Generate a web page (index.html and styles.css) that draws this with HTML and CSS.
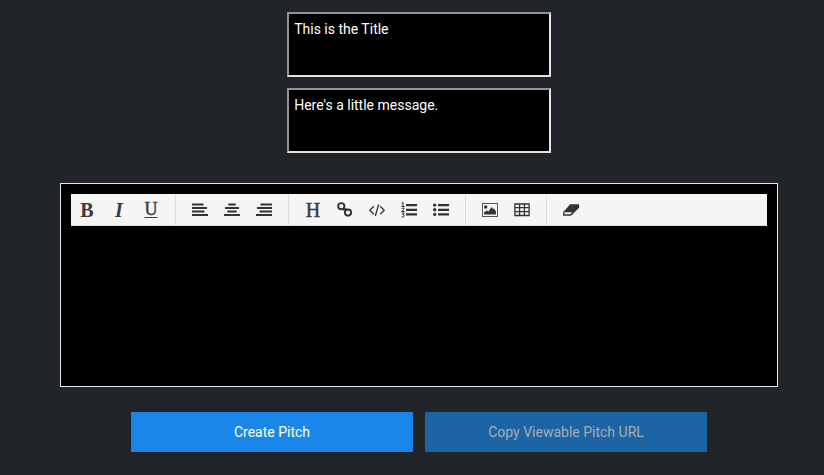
FILE: index.html
```html
<!DOCTYPE html>
<html lang="en">
<head>
<meta charset="utf-8">
<title>Create Pitch</title>
<link rel="stylesheet" href="styles.css">
</head>
<body>
<main class="page">
  <textarea class="field" spellcheck="false">This is the Title</textarea>
  <textarea class="field" spellcheck="false">Here's a little message.</textarea>
  <section class="editor">
    <div class="toolbar">
      <div class="group">
        <button class="tool letter bold">B</button>
        <button class="tool letter italic">I</button>
        <button class="tool letter underline">U</button>
      </div>
      <div class="group">
        <button class="tool" aria-label="Align left"><svg viewBox="0 0 16 14"><path d="M0 .5h11.500v2.100H0zM0 4h15v2.100H0zM0 7.500h12.500v2.100H0zM0 11h16v2.100H0z"/></svg></button>
        <button class="tool" aria-label="Align center"><svg viewBox="0 0 16 14"><path d="M4.300 .5h7.400v2.100H4.300zM1 4h14v2.100H1zM3.300 7.500h9.400v2.100H3.300zM0 11h16v2.100H0z"/></svg></button>
        <button class="tool" aria-label="Align right"><svg viewBox="0 0 16 14"><path d="M4.500 .5H16v2.100H4.500zM1 4h15v2.100H1zM3.500 7.500H16v2.100H3.500zM0 11h16v2.100H0z"/></svg></button>
      </div>
      <div class="group">
        <button class="tool letter heading">H</button>
        <button class="tool" aria-label="Link"><svg viewBox="0 0 16 14"><g class="line link"><circle cx="4.300" cy="3.200" r="3.100"/><circle cx="11" cy="9.600" r="3.100"/><path d="M5.200 5.500l2.600 1.800M7.500 5.500l2.500 1.800"/></g></svg></button>
        <button class="tool" aria-label="Code"><svg viewBox="0 0 16 14"><path class="line code" d="M4.800 3.300L.8 7.300l4 4M11.200 3.300l4 4-4 4M9.700 1.500L6.300 13"/></svg></button>
        <button class="tool" aria-label="Numbered list"><svg viewBox="0 0 16 14"><path d="M5 1h11v2.200H5zM5 5.700h11v2.200H5zM5 10.300h11v2.200H5z"/><path class="line digits" d="M.6.300L2-.7v4M.4 3.500h3.200M.6 5.500Q3.200 4 3.200 6L.6 8.500h3M.6 10h2.600L1.800 11.700Q3.500 11.700 3.200 13.300Q2.500 14.500 .5 13.900"/></svg></button>
        <button class="tool" aria-label="Bulleted list"><svg viewBox="0 0 16 14"><path d="M5 1h11v2.200H5zM5 5.700h11v2.200H5zM5 10.300h11v2.200H5z"/><circle cx="1.700" cy="2.100" r="1.700"/><circle cx="1.700" cy="6.800" r="1.700"/><circle cx="1.700" cy="11.400" r="1.700"/></svg></button>
      </div>
      <div class="group">
        <button class="tool" aria-label="Image"><svg viewBox="0 0 16 14"><rect class="line frame" x=".5" y=".5" width="15" height="13"/><circle cx="3.700" cy="4" r="1.700"/><path d="M2 11.500V9.500L4.500 7.500l2 1L9.500 4l1.500 2 1-.5 2 3v3z"/></svg></button>
        <button class="tool" aria-label="Table"><svg viewBox="0 0 16 14"><path class="line grid" d="M.9 1h14.200v11.500H.9zM.9 4.700h14.200M.9 8.600h14.200M5.600 1v11.500M10.400 1v11.500"/></svg></button>
      </div>
      <div class="group last">
        <button class="tool" aria-label="Clear formatting"><svg viewBox="0 0 16 14"><path d="M7 1.300h9V4L11 8.500H1z"/><path class="line eraser" d="M1 8.500L.6 12h7.200L15.500 4.500V2M1 8.500h9.200M10.200 8.500L7.800 12"/></svg></button>
      </div>
    </div>
    <div class="content"></div>
  </section>
  <div class="actions">
    <button class="action">Create Pitch</button>
    <button class="action" disabled>Copy Viewable Pitch URL</button>
  </div>
</main>
</body>
</html>
```
FILE: styles.css
```css
* { box-sizing: border-box; }
body {
  margin: 0;
  height: 475px;
  overflow: hidden;
  background: #212429;
  font-family: Roboto, sans-serif;
}
button { border: 0; padding: 0; margin: 0; }
.page {
  width: 838px;
  padding-top: 12px;
  display: flex;
  flex-direction: column;
  align-items: center;
}
.field {
  display: block;
  width: 264px;
  height: 65px;
  margin: 0 0 11px;
  padding: 7px 5.2px;
  border: 2px solid;
  border-color: #949494 #e2e2e2 #e2e2e2 #949494;
  background: #000;
  color: #fff;
  font: 14px/16px Roboto, sans-serif;
  resize: none;
  overflow: hidden;
}
.editor {
  width: 718px;
  height: 204px;
  margin-top: 19px;
  padding: 10px;
  border: 1px solid #e8e8e8;
  background: #000;
}
.toolbar {
  display: flex;
  height: 32px;
  background: #f5f5f5;
  border-bottom: 1px solid #ddd;
}
.group {
  display: flex;
  padding-right: 8px;
  margin-right: 8px;
  border-right: 1px solid #ddd;
}
.group.last { border: 0; }
.tool {
  width: 32px;
  height: 31px;
  display: flex;
  align-items: center;
  justify-content: center;
  background: transparent;
  color: #3a3a3a;
}
.tool svg { width: 16px; height: 14px; fill: #333; overflow: visible; }
.tool .line { fill: none; stroke: #333; stroke-width: 1.3; }
.tool .link { stroke-width: 1.9; }
.tool .digits { stroke-width: 1; }
.tool .frame { stroke-width: 1; stroke: #555; }
.letter {
  padding-top: 2px;
  font: 20px/29px "Liberation Serif", serif;
}
.bold { font-weight: bold; }
.italic { font-style: italic; font-weight: bold; }
.underline {
  padding-top: 0;
  font-size: 18px;
  -webkit-text-stroke: 0.5px #3a3a3a;
  text-decoration: underline 1px;
  text-underline-offset: 2px;
}
.heading { -webkit-text-stroke: 0.5px #3a3a3a; }
.actions { display: flex; gap: 12px; margin-top: 25px; }
.action {
  width: 282px;
  height: 40px;
  background: #1b86e9;
  color: #fff;
  font: 14px Roboto, sans-serif;
}
.action:disabled { background: #1d64a5; color: #a6adb5; }
```
